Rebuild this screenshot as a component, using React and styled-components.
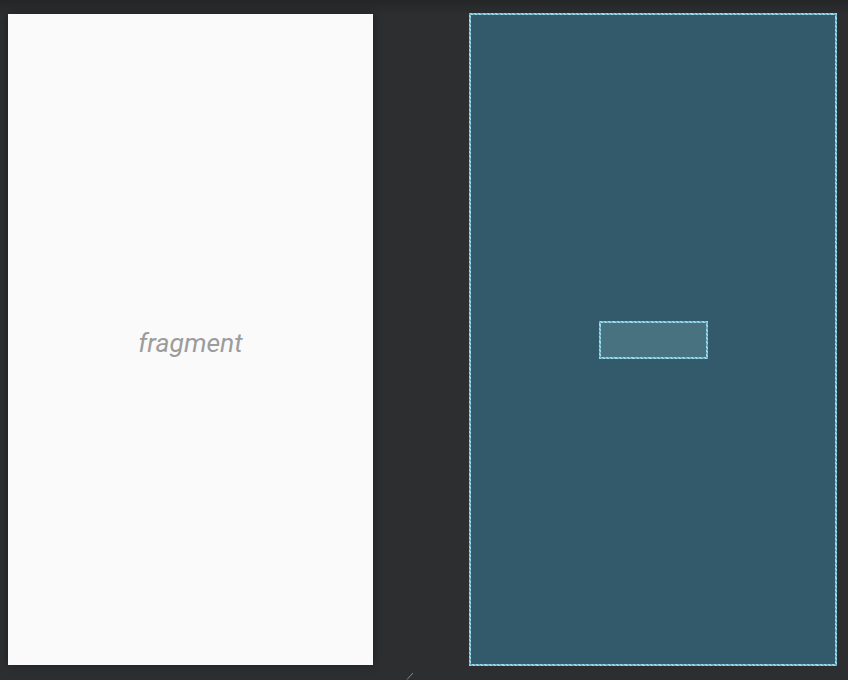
import React from 'react'
import styled, { createGlobalStyle } from 'styled-components'

const Global = createGlobalStyle`
    html, body {
        margin: 0;
        padding: 0;
        background: #2d2e30;
    }
    body {
        font-family: Roboto, "Noto Sans", sans-serif;
    }
`;

const App = () => {
    return (
        <>
            <Global />
            <Canvas>
                <Design>
                    <Label>fragment</Label>
                </Design>
                <Blueprint>
                    <Widget />
                </Blueprint>
                <Handle width="8" height="8" viewBox="0 0 8 8">
                    <line x1="1" y1="7.5" x2="7" y2="1" stroke="#8a8b8d" strokeWidth="1" />
                </Handle>
            </Canvas>
        </>
    )
}

// Canvas
const Canvas = styled.div`
    position: relative;
    width: 848px;
    height: 680px;
    overflow: hidden;
    background: linear-gradient(to bottom, #242527 0px, #2d2e30 14px, #2d2e30 100%);

    display: flex;
    align-items: flex-start;
    gap: 96px;
    padding: 14px 0 0 8px;
    box-sizing: border-box;
`;

// Design surface
const Design = styled.div`
    width: 365px;
    height: 651px;
    background: #fafafa;
    box-shadow: 0 0 8px rgba(0, 0, 0, 0.35);

    display: flex;
    justify-content: center;
    align-items: center;
`;
const Label = styled.span`
    font-family: Roboto, "Noto Sans", sans-serif;
    font-style: italic;
    font-size: 26.5px;
    color: #9c9c9c;
    margin-top: 5px;
`;

// Blueprint surface
const dash = `repeating-linear-gradient(45deg, #9fd8ea 0 1.5px, #6cb0c6 1.5px 3px) 2`;

const Blueprint = styled.div`
    width: 368px;
    height: 653px;
    margin-top: -1px;
    box-sizing: border-box;
    background: #335a6b;
    border: 2px solid #7fc2d6;
    border-image: ${dash};

    display: flex;
    justify-content: center;
    align-items: center;
`;
const Widget = styled.div`
    width: 109px;
    height: 38px;
    box-sizing: border-box;
    background: #48727f;
    border: 2px solid #83c6da;
    border-image: ${dash};
`;

// resize mark
const Handle = styled.svg`
    position: absolute;
    left: 406px;
    top: 672px;
`;

export default App
